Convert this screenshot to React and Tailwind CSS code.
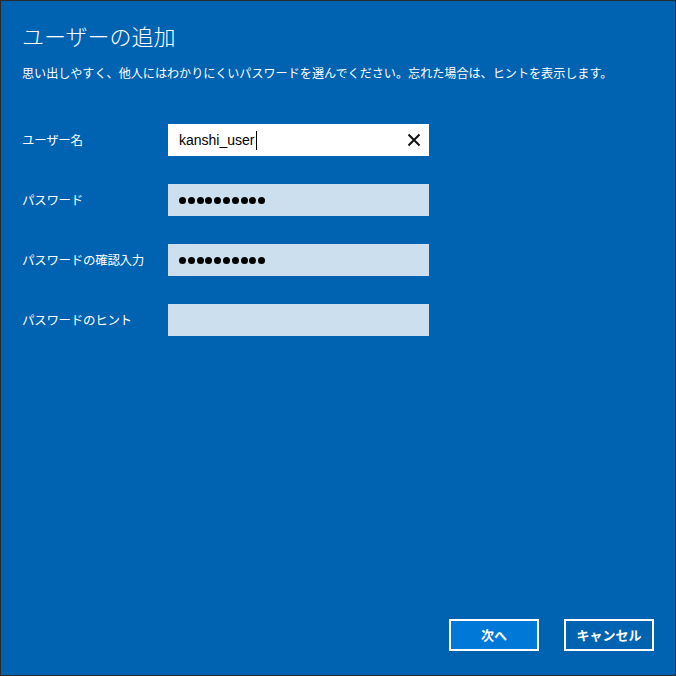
import React from "react";

const font = { fontFamily: '"Noto Sans CJK JP", "Noto Sans", sans-serif' };

// Campo de contraseña con puntos
const Dots = ({ count }) => (
    <div className="flex items-center gap-[1.8px]">
        {Array.from({ length: count }).map((_, i) => (
            <span key={i} className="w-[7px] h-[7px] rounded-full bg-black" />
        ))}
    </div>
);

const Row = ({ label, children, white }) => (
    <div className="flex items-center h-[32px]">
        <div className="w-[146px] text-[12.5px] text-white tracking-[-0.3px]">{label}</div>
        <div className={`w-[261px] h-[32px] flex items-center pl-[11px] pr-[8px] ${white ? "bg-white" : "bg-[#cbdfee]"}`}>
            {children}
        </div>
    </div>
);

const App = () => {
    return (
        <div className="w-[676px] h-[676px] bg-[#0063b1] border border-[#2b2b2b] flex flex-col" style={font}>
            <div className="pl-[21px] pt-[18px]">
                <h1 className="text-[22px] leading-[32px] font-light text-white">ユーザーの追加</h1>
                <p className="mt-[13px] text-[12.1px] leading-[18px] text-white">
                    思い出しやすく、他人にはわかりにくいパスワードを選んでください。忘れた場合は、ヒントを表示します。
                </p>

                <div className="mt-[42px] flex flex-col gap-[28px]">
                    <Row label="ユーザー名" white>
                        <span className="text-[14px] text-black" style={{ fontFamily: '"Liberation Sans", Arial, sans-serif' }}>
                            kanshi_user
                        </span>
                        <span className="w-px h-[19px] bg-black ml-[1px]" />
                        <svg className="ml-auto w-[14px] h-[14px]" viewBox="0 0 14 14">
                            <path d="M1.5 1.5 L12.5 12.5 M12.5 1.5 L1.5 12.5" stroke="#111" strokeWidth="2" />
                        </svg>
                    </Row>
                    <Row label="パスワード">
                        <Dots count={10} />
                    </Row>
                    <Row label="パスワードの確認入力">
                        <Dots count={10} />
                    </Row>
                    <Row label="パスワードのヒント" />
                </div>
            </div>

            <div className="mt-auto mb-[24px] flex justify-end gap-[25px] pr-[21px]">
                <button className="w-[90px] h-[32px] bg-[#0078d7] border-2 border-white text-white text-[13px] font-bold">
                    次へ
                </button>
                <button className="w-[90px] h-[32px] bg-[#0063b1] border-2 border-white text-white text-[13px] font-bold">
                    キャンセル
                </button>
            </div>
        </div>
    );
};

export default App;
